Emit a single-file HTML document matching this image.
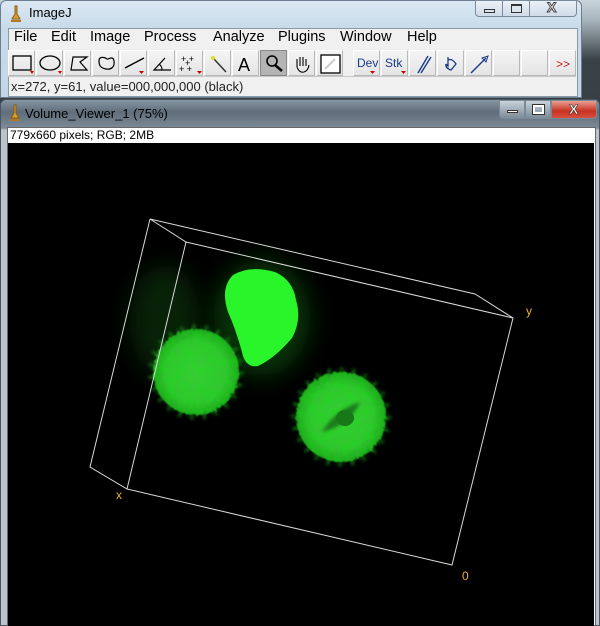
<!DOCTYPE html>
<html><head><meta charset="utf-8"><style>
*{margin:0;padding:0;box-sizing:border-box}
body{width:600px;height:626px;overflow:hidden;position:relative;font-family:"Liberation Sans",sans-serif;background:linear-gradient(180deg,#c9d4dc 0,#a8b4bc 20px,#3a4248 60px,#222a2c 100%)}
.abs{position:absolute}
#w1{left:0;top:0;width:582px;height:98px;background:linear-gradient(180deg,#dbe8f3 0,#c9dbea 26px,#c4d6e6 100%);border:1px solid #6d7f8e;border-radius:6px 6px 0 0}
#w1 .ttl{left:28px;top:4px;font-size:13px;color:#000}
.inner{background:#f0f0f0;border:1px solid #8a9aa8}
.menu span{position:absolute;top:0;font-size:14.5px;color:#000}
.btn{position:absolute;top:50px;width:27px;height:26px;background:linear-gradient(#f4f4f4,#e4e4e4);border-right:1px solid #b8b8b8;border-bottom:1px solid #b8b8b8;border-left:1px solid #fff;border-top:1px solid #fff}
.btn svg{position:absolute;left:0;top:0}
.wb{position:absolute;border:1px solid #7a8a99;background:linear-gradient(#eaf1f8,#cfdbe7)}
</style></head><body>
<div id="w1" class="abs">
 <svg class="abs" style="left:8px;top:4px" width="14" height="18"><path d="M6 1 L8 1 L8 9 L11 14 L3 14 L6 9Z" fill="#d8a030" stroke="#8a5a10" stroke-width="1"/><rect x="2" y="15" width="10" height="2" fill="#b07820"/></svg>
 <div class="abs ttl">ImageJ</div>
 <div class="wb" style="left:474px;top:-1px;width:28px;height:17px;border-radius:0 0 0 4px"><div class="abs" style="left:8px;top:8px;width:11px;height:4px;border:1px solid #333"></div></div>
 <div class="wb" style="left:501px;top:-1px;width:28px;height:17px"><div class="abs" style="left:8px;top:3px;width:11px;height:9px;border:1px solid #333;border-top-width:2px"></div></div>
 <div class="wb" style="left:528px;top:-1px;width:48px;height:17px;border-radius:0 0 4px 0"><div class="abs" style="left:17px;top:-2px;font-size:14px;font-weight:bold;color:#fff;-webkit-text-stroke:1px #444">X</div></div>
 <div class="abs inner" style="left:7px;top:27px;width:570px;height:69px"></div>
</div>
<div class="abs menu" style="left:14px;top:29px;width:560px;height:20px">
 <span style="left:0">File</span><span style="left:37px">Edit</span><span style="left:76px">Image</span><span style="left:130px">Process</span><span style="left:199px">Analyze</span><span style="left:264px">Plugins</span><span style="left:326px">Window</span><span style="left:393px">Help</span>
</div>
<div class="btn" style="left:8px"><svg width="27" height="26"><rect x="4" y="5" width="18" height="14" fill="none" stroke="#000" stroke-width="1.3"/><path d="M21 20l4 0-2 3z" fill="#c00"/></svg></div>
<div class="btn" style="left:36px"><svg width="27" height="26"><ellipse cx="13" cy="12" rx="10" ry="7" fill="none" stroke="#000" stroke-width="1.3"/><path d="M21 20l4 0-2 3z" fill="#c00"/></svg></div>
<div class="btn" style="left:64px"><svg width="27" height="26"><path d="M6 19 L8 6 L22 6 L15 11 L22 19Z" fill="none" stroke="#000" stroke-width="1.2"/></svg></div>
<div class="btn" style="left:92px"><svg width="27" height="26"><path d="M6 10c0-6 7-3 8-2s6-4 7 2-3 9-8 8-7-3-7-8z" fill="none" stroke="#000" stroke-width="1.2"/></svg></div>
<div class="btn" style="left:120px"><svg width="27" height="26"><path d="M4 17 L23 7" stroke="#000" stroke-width="1.4"/><path d="M18 20l5 0-2.5 3z" fill="#c00"/></svg></div>
<div class="btn" style="left:148px"><svg width="27" height="26"><path d="M22 19 L5 19 L16 7 M10 13 q3 2 3 6" fill="none" stroke="#000" stroke-width="1.2"/></svg></div>
<div class="btn" style="left:176px"><svg width="27" height="26" font-size="9" fill="#000"><text x="4" y="11">+ +</text><text x="8" y="15">+</text><text x="2" y="21">+ +</text><path d="M20 20l5 0-2.5 3z" fill="#c00"/></svg></div>
<div class="btn" style="left:204px"><svg width="27" height="26"><path d="M9 8 L21 21" stroke="#333" stroke-width="1.5"/><circle cx="8" cy="7" r="2" fill="#dd2"/></svg></div>
<div class="btn" style="left:232px"><svg width="27" height="26"><text x="5" y="20" font-size="18" font-family="Liberation Sans">A</text></svg></div>
<div class="btn" style="left:260px;background:#b4b4b4;border-color:#888"><svg width="27" height="26"><circle cx="11" cy="10" r="5" fill="none" stroke="#000" stroke-width="1.6"/><path d="M14 14 L21 20" stroke="#000" stroke-width="2.5"/></svg></div>
<div class="btn" style="left:288px"><svg width="27" height="26"><path d="M8 16 V8 M11 15 V6 M14 15 V6 M17 15 V8 M8 16 q2 6 7 5 q4 -1 5 -7" fill="none" stroke="#000" stroke-width="1.1"/></svg></div>
<div class="btn" style="left:316px"><svg width="27" height="26"><rect x="4" y="4" width="19" height="18" fill="#fff" stroke="#000" stroke-width="1.3"/><path d="M8 18 L18 8" stroke="#ccc" stroke-width="2"/></svg></div>
<div class="btn" style="left:353px"><svg width="27" height="26"><text x="3" y="16" font-size="12" fill="#1a3a8a" font-family="Liberation Sans">Dev</text><path d="M16 20l5 0-2.5 3z" fill="#c00"/></svg></div>
<div class="btn" style="left:381px"><svg width="27" height="26"><text x="3" y="16" font-size="12" fill="#1a3a8a" font-family="Liberation Sans">Stk</text><path d="M19 20l5 0-2.5 3z" fill="#c00"/></svg></div>
<div class="btn" style="left:409px"><svg width="27" height="26"><path d="M8 22 L18 5 M11 22 L21 6" stroke="#1a3a8a" stroke-width="1.4"/></svg></div>
<div class="btn" style="left:437px"><svg width="27" height="26"><path d="M10 6 L10 15 L8 13 M10 9 q4 -2 8 4 l-5 6 q-6 -2 -5 -6" fill="none" stroke="#1a3a8a" stroke-width="1.3"/></svg></div>
<div class="btn" style="left:465px"><svg width="27" height="26"><path d="M5 22 L20 7" stroke="#1a3a8a" stroke-width="1.4"/><path d="M16 7 L22 5 L20 11Z" fill="none" stroke="#1a3a8a"/></svg></div>
<div class="btn" style="left:493px"></div>
<div class="btn" style="left:521px"></div>
<div class="btn" style="left:549px;width:27px"><svg width="27" height="26"><text x="6" y="17" font-size="12" fill="#c02020" font-family="Liberation Sans">&gt;&gt;</text></svg></div>
<div class="abs" style="left:8px;top:76px;width:568px;height:1px;background:#c8c8c8"></div>
<div class="abs" style="left:11px;top:79px;font-size:13px;color:#222">x=272, y=61, value=000,000,000 (black)</div>

<div class="abs" style="left:0;top:99px;width:600px;height:527px;background:linear-gradient(180deg,#8696a2 0,#5f6e7a 12px,#7b8a96 28px,#b9c4cd 30px);border:1px solid #4a5560;border-radius:6px 6px 0 0"></div>
<svg class="abs" style="left:8px;top:104px" width="14" height="18"><path d="M6 1 L8 1 L8 9 L11 14 L3 14 L6 9Z" fill="#d8a030" stroke="#8a5a10" stroke-width="1"/><rect x="2" y="15" width="10" height="2" fill="#b07820"/></svg>
<div class="abs" style="left:25px;top:106px;font-size:13px;color:#000">Volume_Viewer_1 (75%)</div>
<div class="wb" style="left:499px;top:100px;width:26px;height:19px;background:linear-gradient(#c8d2da,#7d8c98);border-radius:0 0 0 4px"><div class="abs" style="left:7px;top:9px;width:11px;height:3px;background:#fff;border:1px solid #333"></div></div>
<div class="wb" style="left:525px;top:100px;width:26px;height:19px;background:linear-gradient(#c8d2da,#7d8c98)"><div class="abs" style="left:7px;top:4px;width:11px;height:9px;border:2px solid #fff;outline:1px solid #333"></div></div>
<div class="wb" style="left:551px;top:100px;width:46px;height:19px;background:linear-gradient(#e8a090,#c83020 60%,#d85040);border-radius:0 0 4px 0"><div class="abs" style="left:17px;top:0;font-size:14px;font-weight:bold;color:#fff;-webkit-text-stroke:0.6px #333">X</div></div>
<div class="abs" style="left:7px;top:127px;width:589px;height:499px;background:#fff;border:1px solid #666"></div>
<div class="abs" style="left:10px;top:128px;font-size:12px;color:#000">779x660 pixels; RGB; 2MB</div>
<div class="abs" style="left:8px;top:143px;width:586px;height:483px;background:#000"></div>
<svg class="abs" style="left:0;top:0" width="600" height="626">
 <defs>
  <filter id="bl" x="-50%" y="-50%" width="200%" height="200%"><feGaussianBlur stdDeviation="12"/></filter>
  <filter id="sp" x="-30%" y="-30%" width="160%" height="160%"><feTurbulence type="fractalNoise" baseFrequency="0.3" numOctaves="2" result="n"/><feDisplacementMap in="SourceGraphic" in2="n" scale="5"/><feGaussianBlur stdDeviation="0.7"/></filter>
  <filter id="sb"><feGaussianBlur stdDeviation="1.5"/></filter>
  <filter id="tx" x="0" y="0" width="100%" height="100%"><feTurbulence type="fractalNoise" baseFrequency="0.12" numOctaves="2"/><feColorMatrix values="0 0 0 0 0  0 0 0 0 0.9  0 0 0 0 0  0 0 0 0.35 0"/></filter>
  <radialGradient id="g1"><stop offset="0" stop-color="#3cc83a"/><stop offset="0.7" stop-color="#36c034"/><stop offset="1" stop-color="#22a020"/></radialGradient>
  <clipPath id="c1"><circle cx="196" cy="372" r="43"/></clipPath>
  <clipPath id="c2"><circle cx="341" cy="417" r="45"/></clipPath>
 </defs>
 <ellipse cx="165" cy="320" rx="35" ry="55" fill="#0a3a0a" filter="url(#bl)" opacity="0.6"/>
 <ellipse cx="262" cy="318" rx="48" ry="58" fill="#0f5a0f" filter="url(#bl)" opacity="0.6"/>
 <circle cx="196" cy="372" r="44" fill="none" stroke="#249a22" stroke-width="8" stroke-dasharray="2 10" filter="url(#sb)" opacity="0.85"/>
 <circle cx="341" cy="417" r="46" fill="none" stroke="#249a22" stroke-width="8" stroke-dasharray="2 10" filter="url(#sb)" opacity="0.85"/>
 <circle cx="196" cy="372" r="44" fill="none" stroke="#249a22" stroke-width="5" stroke-dasharray="1 7" stroke-dashoffset="4" filter="url(#sb)" opacity="0.6"/>
 <circle cx="341" cy="417" r="46" fill="none" stroke="#249a22" stroke-width="5" stroke-dasharray="1 7" stroke-dashoffset="4" filter="url(#sb)" opacity="0.6"/>
 <circle cx="196" cy="372" r="43" fill="url(#g1)" filter="url(#sp)"/>
 <circle cx="341" cy="417" r="45" fill="url(#g1)" filter="url(#sp)"/>
 <rect x="150" y="326" width="92" height="92" clip-path="url(#c1)" filter="url(#tx)"/>
 <rect x="294" y="370" width="94" height="94" clip-path="url(#c2)" filter="url(#tx)"/>
 <path d="M322 432 Q335 410 360 402 Q350 425 322 432Z" fill="#1a7a1a" filter="url(#sb)"/>
 <ellipse cx="345" cy="418" rx="9" ry="8" fill="#187818"/>
 <path d="M233 275 Q250 265 275 272 Q293 280 296 300 Q302 320 292 338 Q275 358 258 366 Q245 368 242 352 Q236 330 228 312 Q220 288 233 275Z" fill="#2af52a"/>
 <g fill="none" stroke="#d8d8d8" stroke-width="1">
  <path d="M150 219 L90 467 L127 489 L452 565 L513 318 L475 294 L150 219 L186 242 L513 318 M186 242 L127 489"/>
 </g>
 <g fill="#e8b030" font-size="12" font-family="Liberation Sans">
  <text x="526" y="315">y</text><text x="116" y="499">x</text><text x="462" y="580">0</text>
 </g>
</svg>
</body></html>
